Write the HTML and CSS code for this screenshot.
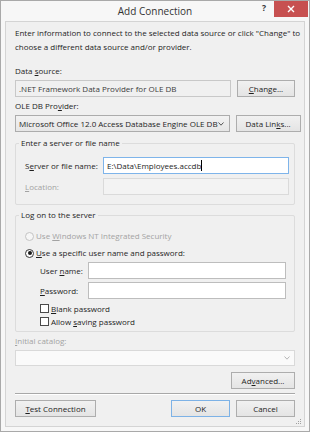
FILE: index.html
```html
<!DOCTYPE html>
<html>
<head>
<meta charset="utf-8">
<title>Add Connection</title>
<link rel="stylesheet" href="styles.css">
</head>
<body>
<div class="window">
  <div class="titlebar">
    <div></div>
    <div class="title">Add Connection</div>
    <div class="caption-btns">
      <span class="help">?</span>
      <span class="close"><svg width="8" height="8" viewBox="0 0 8 8"><path d="M1 1 L7 7 M7 1 L1 7" stroke="#fff" stroke-width="1.4" fill="none"/></svg></span>
    </div>
  </div>
  <div class="client">
    <p class="intro">Enter information to connect to the selected data source or click "Change" to<br>choose a different data source and/or provider.</p>
    <div class="label lbl-ds">Data <u>s</u>ource:</div>
    <div class="row">
      <div class="textbox readonly">.NET Framework Data Provider for OLE DB</div>
      <button class="btn w58"><u>C</u>hange...</button>
    </div>
    <div class="label">OLE DB Pro<u>v</u>ider:</div>
    <div class="row">
      <div class="combo"><span>Microsoft Office 12.0 Access Database Engine OLE DB</span><svg class="chev" width="6" height="4" viewBox="0 0 6 4"><polyline points="0.5,0.5 3,3.2 5.5,0.5" fill="none" stroke="#555" stroke-width="1"/></svg></div>
      <button class="btn w65">Data Lin<u>k</u>s...</button>
    </div>

    <div class="group g1">
      <div class="group-title">Enter a server or file name</div>
      <div class="frow f-first">
        <span class="flabel">S<u>e</u>rver or file name:</span>
        <div class="textbox focus">E:\Data\Employees.accdb<span class="caret"></span></div>
      </div>
      <div class="frow f-second">
        <span class="flabel disabled"><u>L</u>ocation:</span>
        <div class="textbox tb-disabled"></div>
      </div>
    </div>

    <div class="group g2">
      <div class="group-title">Log on to the server</div>
      <div class="opt r1 disabled"><span class="radio radio-disabled"></span><span>Use <u>W</u>indows NT Integrated Security</span></div>
      <div class="opt r2"><span class="radio"><span class="dot"></span></span><span><u>U</u>se a specific user name and password:</span></div>
      <div class="frow urow">
        <span class="ulabel">User <u>n</u>ame:</span>
        <div class="textbox"></div>
      </div>
      <div class="frow prow">
        <span class="ulabel"><u>P</u>assword:</span>
        <div class="textbox"></div>
      </div>
      <div class="opt cb cb1"><span class="check"></span><span><u>B</u>lank password</span></div>
      <div class="opt cb cb2"><span class="check"></span><span>Allow <u>s</u>aving password</span></div>
    </div>

    <div class="label cat disabled"><u>I</u>nitial catalog:</div>
    <div class="combo combo-disabled"><span></span><svg class="chev" width="6" height="4" viewBox="0 0 6 4"><polyline points="0.5,0.5 3,3.2 5.5,0.5" fill="none" stroke="#b5b5b5" stroke-width="1"/></svg></div>

    <div class="adv-row">
      <button class="btn w64">Ad<u>v</u>anced...</button>
    </div>

    <div class="sep"></div>

    <div class="bottom-row">
      <button class="btn w81"><u>T</u>est Connection</button>
      <div class="ok-cancel">
        <button class="btn default w59">OK</button>
        <button class="btn w59">Cancel</button>
      </div>
    </div>

    <svg class="grip" width="6" height="6" viewBox="0 0 6 6">
      <rect x="4" y="0" width="1" height="1" fill="#a0a0a0"/>
      <rect x="2" y="2" width="1" height="1" fill="#a0a0a0"/>
      <rect x="4" y="2" width="1" height="1" fill="#a0a0a0"/>
      <rect x="0" y="4" width="1" height="1" fill="#a0a0a0"/>
      <rect x="2" y="4" width="1" height="1" fill="#a0a0a0"/>
      <rect x="4" y="4" width="1" height="1" fill="#a0a0a0"/>
    </svg>
  </div>
</div>
</body>
</html>
```

FILE: styles.css
```css
* { box-sizing: border-box; }

html, body {
  margin: 0;
  padding: 0;
}

body {
  width: 310px;
  height: 432px;
  font-family: "Open Sans", "Noto Sans", sans-serif;
  font-size: 8px;
  color: #1e1e1e;
  background: #ffffff;
}

u {
  text-decoration: underline;
  text-underline-offset: 1px;
  text-decoration-thickness: 1px;
}

.window {
  width: 310px;
  height: 432px;
  border: 1px solid #a9a9a9;
  background: #f7f7f7;
  display: flex;
  flex-direction: column;
}

/* Title bar */
.titlebar {
  flex: none;
  height: 20px;
  display: grid;
  grid-template-columns: 1fr auto 1fr;
}

.title {
  font-size: 10px;
  line-height: 20px;
  color: #333333;
  white-space: nowrap;
}

.caption-btns {
  display: flex;
  justify-content: flex-end;
  align-items: flex-start;
}

.help {
  font-weight: bold;
  font-size: 8.5px;
  line-height: 14px;
  color: #333333;
  margin-right: 8px;
}

.close {
  width: 34px;
  height: 16px;
  margin-right: 1px;
  background: #c75050;
  display: flex;
  align-items: center;
  justify-content: center;
}

/* Client area */
.client {
  flex: 1;
  margin: 0 4px 4px;
  border: 1px solid #d4d4d4;
  background: #f0f0f0;
  padding: 4px 9px 0;
  display: flex;
  flex-direction: column;
  position: relative;
}

.intro {
  margin: 0;
  line-height: 14px;
  white-space: nowrap;
}

.label {
  line-height: 14px;
  margin-top: 2px;
  white-space: nowrap;
}

.lbl-ds { margin-top: 10px; }

.disabled { color: #a3a3a3; }

.row {
  display: flex;
  gap: 6px;
  margin-top: 2px;
  height: 17px;
}

.textbox {
  flex: 1;
  height: 17px;
  border: 1px solid #bdbdbd;
  background: #ffffff;
  padding-left: 3px;
  white-space: nowrap;
  overflow: hidden;
  display: flex;
  align-items: center;
}

.readonly {
  background: #f0f0f0;
  border-color: #c8c8c8;
  color: #3c3c3c;
}

.focus { border-color: #7eb4ea; }

.tb-disabled {
  background: #f3f3f3;
  border-color: #dadada;
}

.caret {
  display: inline-block;
  width: 1px;
  height: 11px;
  background: #000;
  margin-left: 0;
}

.combo {
  height: 17px;
  flex: 1;
  border: 1px solid #acacac;
  background: linear-gradient(#f2f2f2, #e6e6e6);
  padding: 0 5px 0 3px;
  display: flex;
  align-items: center;
  justify-content: space-between;
  white-space: nowrap;
}

.chev { flex: none; }

.combo-disabled {
  flex: none;
  height: 16px;
  margin-top: 2px;
  background: #fafafa;
  border-color: #d9d9d9;
  padding-right: 4px;
}

.btn {
  font: inherit;
  color: inherit;
  height: 17px;
  padding: 0;
  margin: 0;
  border: 1px solid #adadad;
  background: linear-gradient(#f1f1f1, #e4e4e4);
  line-height: 15px;
  flex: none;
  white-space: nowrap;
}

.default { border-color: #7db2e6; }

.w58 { width: 58px; }
.w59 { width: 59px; }
.w64 { width: 64px; }
.w65 { width: 65px; }
.w81 { width: 81px; }

/* Group boxes */
.group {
  border: 1px solid #dcdcdc;
  border-radius: 2px;
  padding: 0 5px 9px 9px;
  display: flex;
  flex-direction: column;
}

.group-title {
  align-self: flex-start;
  margin: -8px 0 0 -6px;
  padding: 0 2px;
  background: #f0f0f0;
  line-height: 14px;
  white-space: nowrap;
}

.g1 { margin-top: 11px; }
.g2 { margin-top: 10px; padding-bottom: 3px; }

.frow {
  display: flex;
  align-items: center;
  height: 17px;
}

.f-first { margin-top: 7px; }
.f-second { margin-top: 4px; }

.flabel {
  width: 78px;
  flex: none;
  white-space: nowrap;
}

.opt {
  display: flex;
  align-items: center;
  line-height: 14px;
  white-space: nowrap;
}

.r1 { margin-top: 7px; }
.r2 { margin-top: 3px; }

.radio {
  width: 9px;
  height: 9px;
  border-radius: 50%;
  border: 1px solid #3a3a3a;
  background: #ffffff;
  margin-right: 2px;
  display: flex;
  align-items: center;
  justify-content: center;
  flex: none;
}

.radio-disabled {
  border-color: #c4c4c4;
  background: #f6f6f6;
}

.dot {
  width: 4px;
  height: 4px;
  border-radius: 50%;
  background: #1a1a1a;
}

.urow { margin-top: 2px; margin-left: 15px; margin-right: 3px; }
.prow { margin-top: 3px; margin-left: 15px; margin-right: 3px; }

.ulabel {
  width: 48px;
  flex: none;
  white-space: nowrap;
}

.cb {
  line-height: 13px;
  margin-left: 15px;
}

.cb1 { margin-top: 3px; }

.check {
  width: 9px;
  height: 9px;
  border: 1px solid #4a4a4a;
  background: #ffffff;
  margin-right: 2px;
  flex: none;
}

.cat { margin-top: 2px; }

.adv-row {
  display: flex;
  justify-content: flex-end;
  margin-top: 6px;
}

.sep {
  margin-top: 4px;
  height: 2px;
  border-top: 1px solid #a8a8a8;
  border-bottom: 1px solid #ffffff;
}

.bottom-row {
  display: flex;
  justify-content: space-between;
  margin-top: 5px;
}

.ok-cancel {
  display: flex;
  gap: 6px;
}

.grip {
  position: absolute;
  right: 2px;
  bottom: 1px;
}
```
